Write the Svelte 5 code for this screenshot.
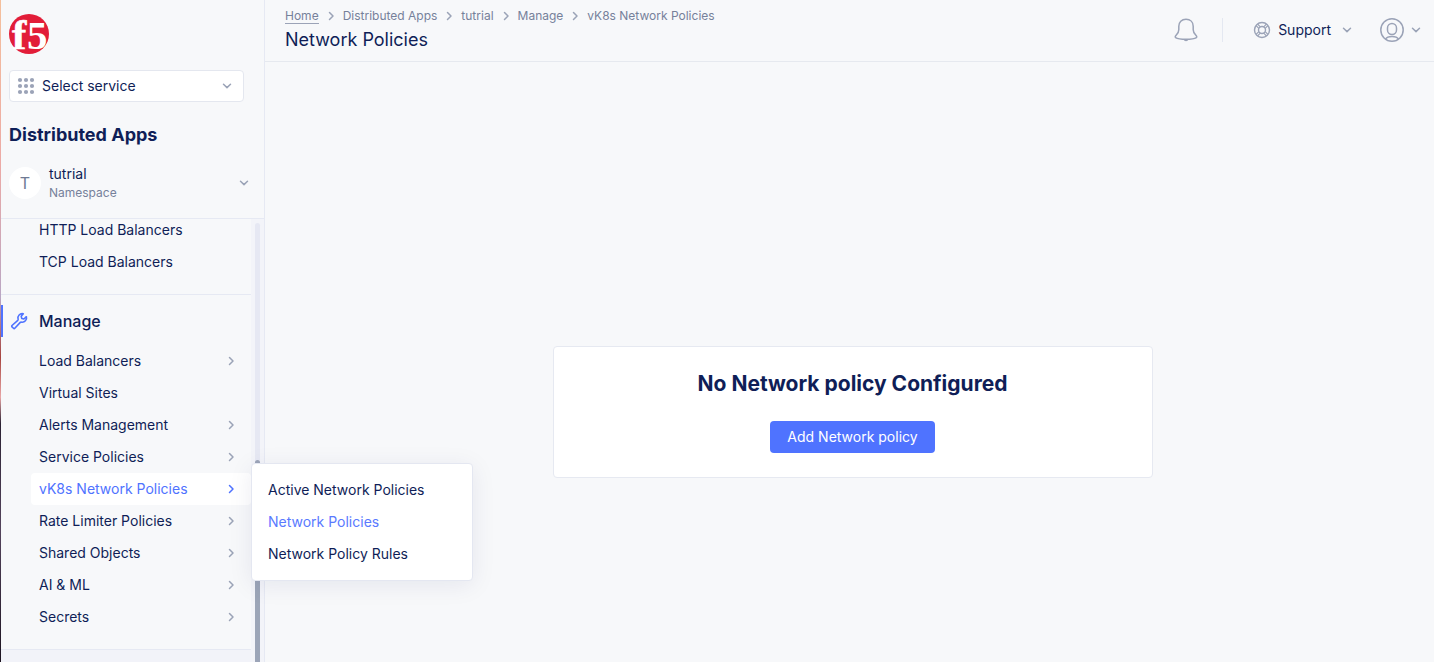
<script>
  import { onMount } from 'svelte';

  const crumbs = ['Home', 'Distributed Apps', 'tutrial', 'Manage', 'vK8s Network Policies'];
  const overview = ['HTTP Load Balancers', 'TCP Load Balancers'];
  const manage = [
    { label: 'Load Balancers', more: true },
    { label: 'Virtual Sites', more: false },
    { label: 'Alerts Management', more: true },
    { label: 'Service Policies', more: true },
    { label: 'vK8s Network Policies', more: true, active: true },
    { label: 'Rate Limiter Policies', more: true },
    { label: 'Shared Objects', more: true },
    { label: 'AI & ML', more: true },
    { label: 'Secrets', more: true }
  ];
  const submenu = ['Active Network Policies', 'Network Policies', 'Network Policy Rules'];
  const dots = [3, 9, 15];

  let list;
  onMount(() => {
    list.scrollTop = 5;
  });
</script>

{#snippet chevronDown()}
  <svg class="chev" width="10" height="10" viewBox="0 0 10 10" aria-hidden="true"><path d="M1.5 3.2 5 6.6l3.500-3.400" /></svg>
{/snippet}

{#snippet chevronRight()}
  <svg class="chev" width="10" height="10" viewBox="0 0 10 10" aria-hidden="true"><path d="M3.500 1.500 7 5 3.500 8.500" /></svg>
{/snippet}

<div class="shell">
  <aside>
    <div class="top">
      <svg class="logo" width="40" height="40" viewBox="0 0 40 40" role="img" aria-label="f5">
        <circle cx="20" cy="20" r="20" fill="#e21d38" />
        <g fill="#fff" font-family="'Liberation Serif', serif" font-weight="700">
          <text x="3" y="35" font-size="43" stroke="#fff" stroke-width=".6">f</text>
          <text x="18" y="35" font-size="41">5</text>
        </g>
      </svg>
      <div class="service">
        <svg width="18" height="18" viewBox="0 0 18 18" fill="#9ba3b7" aria-hidden="true">
          {#each dots as y}{#each dots as x}<circle cx={x} cy={y} r="2.100" />{/each}{/each}
        </svg>
        <select aria-label="Service"><option>Select service</option></select>
        {@render chevronDown()}
      </div>
      <h2>Distributed Apps</h2>
      <button class="namespace">
        <span class="avatar">T</span>
        <span class="names"><span>tutrial</span><small>Namespace</small></span>
        {@render chevronDown()}
      </button>
    </div>

    <div class="scroll">
      <nav class="list" bind:this={list} aria-label="Sections">
        <ul>
          {#each overview as label}<li><a href="#top">{label}</a></li>{/each}
        </ul>
        <section>
          <h3>
            <svg width="18" height="18" viewBox="0 0 18 18" fill="none" stroke="#4f73ff" stroke-width="1.600" stroke-linejoin="round" stroke-linecap="round" aria-hidden="true">
              <path d="M13.300 1.800a4.300 4.300 0 0 0-5.200 5.400c.1.400 0 .8-.3 1.100L2 13.500a.9.9 0 0 0 0 1.300l1.500 1.500a.9.900 0 0 0 1.300 0l5.500-5.900c.3-.3.700-.4 1.100-.3a4.300 4.300 0 0 0 5-5.400l-2.500 2.300-2.100-.5-.6-2.200z" />
            </svg>
            Manage
          </h3>
          <ul>
            {#each manage as item}
              <li>
                <a href="#top" class:active={item.active}>
                  {item.label}
                  {#if item.more}{@render chevronRight()}{/if}
                </a>
              </li>
            {/each}
          </ul>
        </section>
        <div class="next"></div>
      </nav>
      <div class="track"><div class="rail"><div class="thumb"></div></div></div>
    </div>

    <ul class="flyout">
      {#each submenu as label, i}<li><a href="#top" class:current={i === 1}>{label}</a></li>{/each}
    </ul>
  </aside>

  <div class="page">
    <header>
      <div class="titles">
        <nav class="crumbs" aria-label="Breadcrumb">
          {#each crumbs as crumb, i}
            {#if i > 0}{@render chevronRight()}{/if}
            {#if i === 0}<a href="#top">{crumb}</a>{:else}<span>{crumb}</span>{/if}
          {/each}
        </nav>
        <h1>Network Policies</h1>
      </div>
      <div class="tools">
        <button class="bell" aria-label="Notifications">
          <svg width="24" height="24" viewBox="0 0 24 24" fill="none" stroke="#9ba3b7" stroke-width="1.500" stroke-linejoin="round" aria-hidden="true">
            <path d="M12 1.200c-4.400 0-7.200 3-7.200 7v3.600c0 2.400-1.100 3.800-2.500 5.300-1 1.100-1.500 2-.7 2.500C3.200 20.600 7.600 21.300 12 21.300s8.800-.7 10.400-1.700c.8-.5.3-1.400-.7-2.500-1.400-1.500-2.500-2.900-2.500-5.300V8.200c0-4-2.800-7-7.200-7z" />
            <path d="M9.500 21.500c.5 1.100 1.300 1.700 2.500 1.700s2-.6 2.500-1.700z" fill="#9ba3b7" stroke="none" />
          </svg>
        </button>
        <span class="divider"></span>
        <button class="support">
          <svg width="18" height="18" viewBox="0 0 18 18" fill="none" stroke="#9ba3b7" stroke-width="1.400" aria-hidden="true">
            <circle cx="9" cy="9" r="7.500" /><circle cx="9" cy="9" r="3.500" />
            <path d="M3 4.500 5.800 7.300M4.500 3 7.300 5.800M15 4.500 12.200 7.300M13.500 3 10.700 5.800M3 13.500 5.800 10.700M4.500 15 7.300 12.200M15 13.500 12.200 10.700M13.500 15 10.700 12.200" stroke-width="1.100" />
          </svg>
          <span>Support</span>
          {@render chevronDown()}
        </button>
        <button class="user" aria-label="Account">
          <svg width="24" height="24" viewBox="0 0 24 24" fill="none" stroke="#9ba3b7" stroke-width="1.500" aria-hidden="true">
            <circle cx="12" cy="12" r="11.200" />
            <rect x="7.500" y="5.500" width="9" height="11" rx="4.500" />
            <path d="M5.600 21.200c1-1.900 3.600-2.700 6.400-2.700s5.400.8 6.400 2.700" />
          </svg>
          {@render chevronDown()}
        </button>
      </div>
    </header>
    <main>
      <div class="card">
        <h2>No Network policy Configured</h2>
        <button>Add Network policy</button>
      </div>
    </main>
  </div>
</div>

<style>
  :global(body) {
    background: #f7f8fa;
    color: #0f1e57;
    font: 14px/20px Inter, sans-serif;
  }
  .shell, .shell * { box-sizing: border-box; }
  h1, h2, h3, ul { margin: 0; padding: 0; }
  ul { list-style: none; }
  a { color: inherit; text-decoration: none; }
  button, select {
    font: inherit;
    color: inherit;
    background: none;
    border: 0;
    padding: 0;
    text-align: left;
    cursor: pointer;
  }
  svg { flex: none; display: block; }
  .chev {
    fill: none;
    stroke: #9ba3b7;
    stroke-width: 1.5;
    stroke-linecap: round;
    stroke-linejoin: round;
  }
  .logo { overflow: visible; }
  .shell {
    display: grid;
    grid-template-columns: 265px minmax(0, 1fr);
    height: 100vh;
    overflow: hidden;
  }
  aside {
    position: relative;
    display: flex;
    flex-direction: column;
    min-height: 0;
    border-right: 1px solid #e6e9f3;
    padding-left: 1px;
    background: linear-gradient(#f5c09c, #ecaaa6 25%, #b9a6c4 45%, #a8453f 54%, #e8a6a6 60%, #2b2233 64%, #54445c 80%, #1c1320) 0 0 / 1px 100% no-repeat;
  }
  .top {
    padding: 14px 8px 16px;
    border-bottom: 1px solid #e6e9f3;
  }
  .service {
    display: flex;
    align-items: center;
    gap: 7px;
    height: 32px;
    margin: 16px 12px 20px 0;
    padding: 0 11px 0 7px;
    background: #fff;
    border: 1px solid #e4e7ef;
    border-radius: 4px;
  }
  .service select {
    flex: 1;
    appearance: none;
    outline: 0;
  }
  .top h2 { font-size: 18px; line-height: 26px; font-weight: 700; }
  .namespace {
    display: flex;
    align-items: center;
    gap: 8px;
    width: 100%;
    margin-top: 16px;
    padding-right: 7px;
  }
  .avatar {
    display: grid;
    place-items: center;
    width: 32px;
    height: 32px;
    border-radius: 50%;
    background: #fff;
    color: #6e7a94;
    font-size: 16px;
  }
  .names { flex: 1; display: grid; }
  .names span { line-height: 20px; }
  .names small { font-size: 12px; line-height: 18px; color: #76819a; }
  .scroll { flex: 1; display: flex; min-height: 0; }
  .list { flex: 1; overflow: hidden; }
  .list > ul { padding-bottom: 16px; border-bottom: 1px solid #e6e9f3; }
  section { padding: 10px 0 16px; border-bottom: 1px solid #e6e9f3; }
  h3 {
    display: flex;
    align-items: center;
    gap: 11px;
    height: 32px;
    padding-left: 9px;
    margin-bottom: 8px;
    font-size: 16px;
    font-weight: 500;
    box-shadow: inset 2px 0 #4f73ff;
  }
  .list li { padding-left: 30px; }
  .list a {
    display: flex;
    align-items: center;
    justify-content: space-between;
    height: 32px;
    padding: 0 15px 0 8px;
    border-radius: 4px;
  }
  .list a.active { background: #fff; color: #4f73ff; }
  .active :global(.chev) { stroke: #4f73ff; }
  .next { height: 200px; background: #f2f3f9; }
  .track { width: 13px; padding: 4px 4px 0; background: #f3f4f9; }
  .rail {
    display: flex;
    flex-direction: column;
    justify-content: flex-end;
    width: 5px;
    height: 100%;
    border-radius: 3px 3px 0 0;
    background: #e6e8f3;
  }
  .thumb { height: 46%; border-radius: 3px 3px 0 0; background: #9ca5b8; }
  .flyout {
    position: absolute;
    z-index: 1;
    left: 251px;
    top: 463px;
    width: 222px;
    padding: 10px 16px;
    background: #fff;
    border: 1px solid #e4e7f1;
    border-radius: 4px;
    box-shadow: 0 4px 24px rgba(15, 30, 87, 0.08);
  }
  .flyout a { display: block; line-height: 32px; }
  .flyout .current { color: #5a7aff; }

  .page { display: flex; flex-direction: column; min-width: 0; }
  header {
    display: flex;
    align-items: center;
    justify-content: space-between;
    height: 62px;
    padding: 0 13px 2px 20px;
    border-bottom: 1px solid #e6e9ef;
  }
  .crumbs {
    display: flex;
    align-items: center;
    gap: 7px;
    font-size: 12px;
    line-height: 16px;
    color: #76819a;
    margin-bottom: 4px;
  }
  .crumbs a { border-bottom: 1px solid #9ba3b7; line-height: 15px; }
  h1 { font-size: 18px; line-height: 24px; font-weight: 400; }
  .titles { padding-top: 1px; }
  .tools { display: flex; align-items: center; }
  .tools button { display: flex; align-items: center; gap: 7px; }
  .divider { width: 1px; height: 24px; margin: 0 30px 0 24px; background: #e4e8f1; }
  .support { margin-right: 28px; }
  .support span { margin-right: 4px; }
  main { flex: 1; padding: 284px 16px 0 22px; }
  .card {
    display: flex;
    flex-direction: column;
    align-items: center;
    gap: 22px;
    max-width: 600px;
    margin: 0 auto;
    padding: 22px 24px 24px;
    background: #fff;
    border: 1px solid #e6e9f1;
    border-radius: 4px;
  }
  .card h2 { font-size: 21px; line-height: 30px; font-weight: 700; }
  .card button {
    height: 32px;
    padding: 0 17px;
    border-radius: 4px;
    background: #4f73ff;
    color: #fff;
  }
</style>
